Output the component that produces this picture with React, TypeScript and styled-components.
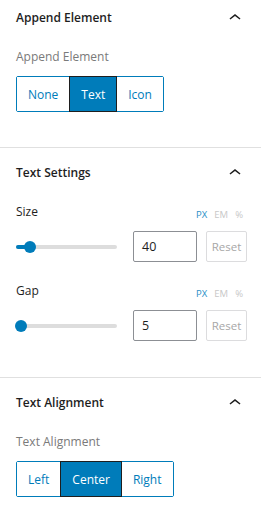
import React from "react";
import styled, { createGlobalStyle } from "styled-components";

const GlobalStyle = createGlobalStyle`
  html, body {
    margin: 0;
    padding: 0;
    background: #ffffff;
  }
  body {
    font-family: "Open Sans", "Noto Sans", sans-serif;
    color: #1e1e1e;
    overflow: hidden;
  }
`;

const ChevronUp = () => (
  <svg width="24" height="24" viewBox="0 0 24 24" fill="#1e1e1e">
    <path d="M6.5 12.4L12 8l5.5 4.4-.9 1.2L12 10l-4.6 3.6-.9-1.2z" />
  </svg>
);

type Option = { label: string; active?: boolean };

const ButtonGroup = ({ options }: { options: Option[] }) => (
  <Group>
    {options.map((o) => (
      <GroupButton key={o.label} $active={o.active}>
        {o.label}
      </GroupButton>
    ))}
  </Group>
);

const RangeControl = ({ label, value, percent }: { label: string; value: string; percent: number }) => (
  <Field>
    <FieldHead>
      <FieldLabel $dark>{label}</FieldLabel>
      <Units>
        <Unit $active>PX</Unit>
        <Unit>EM</Unit>
        <Unit>%</Unit>
      </Units>
    </FieldHead>
    <RangeRow>
      <Track>
        <Fill style={{ width: `${percent}%` }} />
        <Thumb style={{ left: `${percent}%` }} />
      </Track>
      <NumberBox>{value}</NumberBox>
      <ResetButton>Reset</ResetButton>
    </RangeRow>
  </Field>
);

export default function App() {
  return (
    <>
      <GlobalStyle />
      <Panel>
        <Section $first>
          <SectionHeader>
            <Title>Append Element</Title>
            <ChevronUp />
          </SectionHeader>
          <FieldLabel>Append Element</FieldLabel>
          <ButtonGroup
            options={[{ label: "None" }, { label: "Text", active: true }, { label: "Icon" }]}
          />
        </Section>

        <Section $bottom={36}>
          <SectionHeader>
            <Title>Text Settings</Title>
            <ChevronUp />
          </SectionHeader>
          <RangeControl label="Size" value="40" percent={14} />
          <RangeControl label="Gap" value="5" percent={5} />
        </Section>

        <Section $last>
          <SectionHeader>
            <Title>Text Alignment</Title>
            <ChevronUp />
          </SectionHeader>
          <FieldLabel>Text Alignment</FieldLabel>
          <ButtonGroup
            options={[{ label: "Left" }, { label: "Center", active: true }, { label: "Right" }]}
          />
        </Section>
      </Panel>
    </>
  );
}

const Panel = styled.div`
  width: 261px;
  display: flex;
  flex-direction: column;
`;

const Section = styled.section<{ $first?: boolean; $last?: boolean; $bottom?: number }>`
  display: flex;
  flex-direction: column;
  align-items: flex-start;
  padding: 0 14px ${(p) => p.$bottom ?? 35}px 16px;
  margin-top: ${(p) => (p.$first ? "-7px" : "0")};
  border-bottom: ${(p) => (p.$last ? "none" : "1px solid #e0e0e0")};
`;

const SectionHeader = styled.div`
  align-self: stretch;
  height: 50px;
  display: flex;
  align-items: center;
  justify-content: space-between;
`;

const Title = styled.h2`
  margin: 0;
  font-size: 12px;
  font-weight: 600;
  line-height: 20px;
  color: #1e1e1e;
`;

const FieldLabel = styled.div<{ $dark?: boolean }>`
  margin-top: 4px;
  font-size: 12px;
  line-height: 20px;
  color: ${(p) => (p.$dark ? "#1e1e1e" : "#7a7a7a")};
`;

const Group = styled.div`
  display: flex;
  margin-top: 9px;
  height: 36px;
  box-sizing: border-box;
  border: 1px solid #007cba;
  border-radius: 2px;
`;

const GroupButton = styled.button<{ $active?: boolean }>`
  font-family: inherit;
  font-size: 12px;
  padding: 0 11px;
  border: ${(p) => (p.$active ? "1px solid #1e1e1e" : "none")};
  margin: ${(p) => (p.$active ? "-1px 0" : "0")};
  background: ${(p) => (p.$active ? "#007cba" : "#ffffff")};
  color: ${(p) => (p.$active ? "#ffffff" : "#007cba")};
  cursor: pointer;
`;

const Field = styled.div`
  align-self: stretch;
  display: flex;
  flex-direction: column;
  & + & {
    margin-top: 15px;
  }
`;

const FieldHead = styled.div`
  display: flex;
  justify-content: space-between;
  align-items: flex-end;
`;

const Units = styled.div`
  display: flex;
  gap: 7px;
  margin-right: 4px;
  margin-bottom: 0;
`;

const Unit = styled.span<{ $active?: boolean }>`
  font-size: 9.5px;
  line-height: 14px;
  color: ${(p) => (p.$active ? "#2a8fc7" : "#c8c8c8")};
`;

const RangeRow = styled.div`
  display: flex;
  align-items: center;
  margin-top: 9px;
`;

const Track = styled.div`
  position: relative;
  flex: 1;
  height: 4px;
  margin-right: 16px;
  border-radius: 2px;
  background: #dddddd;
`;

const Fill = styled.div`
  height: 100%;
  border-radius: 2px;
  background: #007cba;
`;

const Thumb = styled.div`
  position: absolute;
  top: 50%;
  width: 12px;
  height: 12px;
  border-radius: 50%;
  background: #007cba;
  transform: translate(-50%, -50%);
`;

const NumberBox = styled.div`
  box-sizing: border-box;
  width: 64px;
  height: 31px;
  padding: 0 8px;
  display: flex;
  align-items: center;
  font-size: 12.5px;
  border: 1px solid #8c8f94;
  border-radius: 2px;
  color: #1e1e1e;
`;

const ResetButton = styled.button`
  box-sizing: border-box;
  height: 31px;
  width: 41px;
  margin-left: 9px;
  padding: 0;
  font-family: inherit;
  font-size: 11.5px;
  color: #a7a7a7;
  background: #ffffff;
  border: 1px solid #dcdcde;
  border-radius: 2px;
`;
